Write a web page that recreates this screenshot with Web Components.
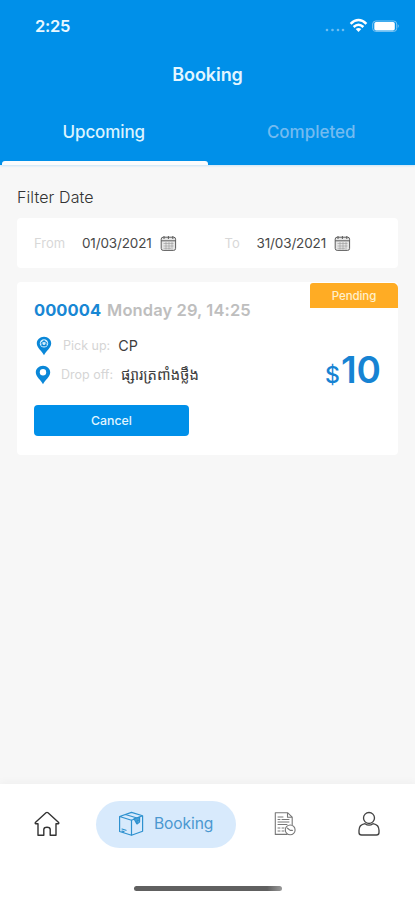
<!DOCTYPE html>
<html lang="en"><head><meta charset="utf-8"><title>Booking</title>
<style>
html,body{margin:0;height:100%;overflow:hidden}
body{font-family:Inter,"Noto Sans",sans-serif}
</style></head><body>
<booking-app></booking-app>
<script>
const define=(name,html)=>{
  const t=document.createElement('template');t.innerHTML=html;
  customElements.define(name,class extends HTMLElement{
    constructor(){super();this.attachShadow({mode:'open'}).append(t.content.cloneNode(true));}
  });
};
define('status-bar',`<style>
:host{display:flex;height:52px;box-sizing:border-box;padding:0 16px 0 35px;align-items:center;justify-content:space-between;color:#e9f8ff}
b{font:600 16.5px/20px Inter,sans-serif;letter-spacing:-.25px}svg{display:block}
</style><b>2:25</b>
<svg width="75" height="18" viewBox="0 0 75 18"><g fill="#6dbdf1"><circle cx="3" cy="13" r="1.3"/><circle cx="8.5" cy="13" r="1.3"/><circle cx="14" cy="13" r="1.3"/><circle cx="19" cy="13" r="1.3"/></g>
<g fill="none" stroke="#fff" stroke-width="2.5"><path d="M26.6 6.8Q34.5-.8 42.4 6.8"/><path d="M29.6 10Q34.5 5.4 39.4 10"/></g><path d="M31.7 12Q34.5 9.8 37.3 12L34.5 15Z" fill="#fff"/>
<rect x="48.7" y="4" width="24" height="10.4" rx="3" fill="none" stroke="#7fc6f3"/><rect x="50.3" y="5" width="20.5" height="8.5" rx="1.7" fill="#fff"/><path d="M73.8 7.3Q75.6 9 73.8 11" fill="#8acbf5"/></svg>`);
define('tab-item',`<style>
:host{display:flex;flex:1;flex-direction:column;justify-content:flex-end;align-items:center;color:#74bbf0;font:500 17px/24px Inter,sans-serif}
:host([active]){color:#dbf3ff}
i{display:block;width:100%;height:4px;margin-top:17px}
:host([active]) i{background:#fbfcfd;border-radius:3px 3px 0 0;width:calc(100% - 2px);margin-left:2px}
</style><slot></slot><i></i>`);
define('app-header',`<style>
:host{display:flex;flex-direction:column;height:165px;background:#0090e9;box-shadow:0 1px 2px #0090e930}
h1{margin:0;text-align:center;color:#e3f6ff;font:600 18px/46px Inter,sans-serif;letter-spacing:-.05px}
nav{display:flex;flex:1}
</style><status-bar></status-bar><h1>Booking</h1><nav><tab-item active style="letter-spacing:-.1px">Upcoming</tab-item><tab-item>Completed</tab-item></nav>`);
define('date-field',`<style>
:host{display:flex;align-items:center;font:400 13.5px/20px Inter,sans-serif;color:#484848}
span{color:#d8d8d8;width:var(--label,48px);font-size:13px}
b{font-weight:400;letter-spacing:-.15px}svg{margin-left:8px}
</style><span><slot name="label"></slot></span><b><slot></slot></b>
<svg width="17" height="17" viewBox="0 0 17 17" fill="none" stroke="#5d5d5d"><rect x="1.2" y="2.2" width="14.4" height="13.2" rx="2" fill="#e6e6e6"/><path d="M1.2 5.8H15.6M4 1V4M8.4 1V4M12.8 1V4"/><path d="M3.5 8.5H13.5M3.5 11H13.5M3.5 13.3H11M6 7V14.5M9 7V14.5M12 7V14.5" stroke="#999" stroke-width=".6"/></svg>`);
define('filter-bar',`<style>
:host{display:flex;height:50px;align-items:center;background:#fff;border-radius:4px;padding-left:17px}
date-field+date-field{margin-left:48px;--label:32px}
</style><date-field><span slot="label">From</span>01/03/2021</date-field><date-field><span slot="label">To</span>31/03/2021</date-field>`);
define('place-row',`<style>
:host{display:flex;height:29px;align-items:center;font:400 14.3px/20px Inter,"Noto Sans Khmer","Khmer OS",sans-serif;color:#3d3d3d}
svg{flex:none;margin-right:var(--gap,11px);margin-left:var(--inset,2px)}
.l{color:#d5d5d5;font-size:12.5px;margin-right:8px}
.home{display:none}:host([home]) .home{display:block}
</style><svg width="16" height="20" viewBox="0 0 16 20"><path d="M8 .7C3.9.7 .8 3.7 .8 7.4 .8 11.7 6 15 8 19.2 10 15 15.2 11.7 15.2 7.4 15.2 3.7 12.1.7 8 .7Z" fill="#0a87d8"/><circle class="dot" cx="8" cy="7.2" r="3.2" fill="#fff"/><g class="home"><circle cx="8" cy="7.4" r="4.2" fill="#d7effd"/><path d="M4.7 7.2 8 4.4 11.3 7.2M5.8 6.5V10H10.2V6.5" fill="#0a87d8" stroke="#0a87d8" stroke-width=".7"/><circle cx="8" cy="7.6" r="1.5" fill="#d7effd"/></g></svg><span class="l"><slot name="label"></slot></span><slot></slot>`);
define('booking-card',`<style>
:host{display:grid;grid-template-columns:1fr auto;grid-template-rows:49px 58px 1fr;height:173px;background:#fff;border-radius:4px;box-sizing:border-box;padding-left:17px}
.head{display:flex;align-items:center;padding-top:7px;font:600 16.5px/20px Inter,sans-serif;color:#bebebe;white-space:nowrap}
.head b{font-weight:650;color:#1887d4;margin-right:6px;letter-spacing:.05px}
.head span{letter-spacing:.1px}
.tag{width:88px;height:25px;margin-top:1px;justify-self:end;background:#ffac24;color:#fff0cc;border-radius:3px 5px 0 0;text-align:center;font:500 11.5px/27px Inter,sans-serif;letter-spacing:-.1px}
.price{align-self:center;padding:24px 17px 0 0;color:#1683d3;font:600 37px/40px Inter,sans-serif;text-align:right;white-space:nowrap}
.price small{font-size:23px;font-weight:500;margin-right:1px}
button{display:block;width:155px;height:31px;border:0;border-radius:4px;background:#0090e9;color:#e0f5ff;font:500 12.3px/31px Inter,sans-serif;padding:0;margin:16px 0 0}
place-row+place-row{--inset:1px;--gap:10px}
</style><div class="head"><b>000004</b><span>Monday 29, 14:25</span></div><div class="tag">Pending</div>
<div><place-row home><span slot="label">Pick up:</span>CP</place-row><place-row><span slot="label">Drop off:</span><span style="font-size:14.8px">ផ្សារត្រពាំងថ្លឹង</span></place-row></div>
<div class="price"><small>$</small>10</div><div><button>Cancel</button></div>`);
define('nav-bar',`<style>
:host{display:flex;flex-direction:column;align-items:center;height:116px;background:#fff;box-shadow:0 -2px 8px #00000009}
.row{display:grid;grid-template-columns:93px 146px 92px 1fr;width:100%;height:48px;margin-top:16px;align-items:center;justify-items:center}
.pill{display:flex;align-items:center;gap:10px;box-sizing:border-box;padding-left:22px;width:140px;height:47px;border-radius:24px;background:#d8eafc;color:#4b98d0;font:400 15.6px/20px Inter,sans-serif;letter-spacing:-.1px}
.bar{width:148px;height:5px;border-radius:3px;background:linear-gradient(90deg,#606060,#606060 90%,#999);margin-top:38px}
svg{display:block;fill:none;stroke:#333;stroke-width:1.4;stroke-linejoin:round;stroke-linecap:round}
</style><div class="row">
<svg width="26" height="26" viewBox="0 0 26 26"><path d="M4 12.8H1.8C1 12.5 1 11.8 1.6 11.2L12 1.7Q13 1 14 1.7L24.4 11.2C25 11.8 25 12.5 24.2 12.8H22V24.2H16.2V18.2Q15.7 16.3 13 16.3 10.3 16.3 9.8 18.2V24.2H4Z"/></svg>
<div class="pill"><svg width="26" height="26" viewBox="0 0 26 26" style="stroke:#2e91cf;stroke-width:1.2"><path d="M1.6 5.5 13.5 1.4 24.6 4.8V20.3L13.5 24.3 1.6 20.5ZM1.6 5.5 13.5 9.2 24.6 4.8M13.5 9.2V24.3M7.5 3.5 19 7V13L21.5 11V6M4 18 8 19.3M4 20 6 20.6"/><path d="M16 7.8 21.5 6V10.4L19.3 9.4 18.6 12.5Z" fill="#4ba1d8"/></svg><span>Booking</span></div>
<svg width="24" height="26" viewBox="0 0 24 26" style="stroke:#777;stroke-width:1.1"><path d="M14 23.4H2.3V1.7H14.5L19.2 6.2V13.6M14.5 1.7V6.2H19.2"/><path d="M5 6H10M5 8.5H7M9 8.5H16M5 11H16M5 13.5H14M5 17H7M9 17H11M5 20H7M9 20H11" stroke-width="1"/><circle cx="17.2" cy="18.9" r="4.9" fill="#fff"/><path d="M14.5 17.2 17.2 19.4H19.4"/></svg>
<svg width="24" height="26" viewBox="0 0 24 26" style="margin-right:9px;stroke:#444;stroke-width:1.35"><circle cx="12" cy="7" r="5.5"/><path d="M8 12.7C4 13.4 2 15.6 2 19.2V21.5Q2 24 4.6 24H19.4Q22 24 22 21.5V19.2C22 15.6 20 13.4 16 12.7Q12 15.6 8 12.7Z"/></svg>
</div><div class="bar"></div>`);
define('booking-app',`<style>
:host{display:flex;flex-direction:column;height:900px;width:415px;background:#f7f7f7}
main{flex:1;padding:20px 17px 0}
h2{margin:0 0 9px;font:300 16px/24px Inter,sans-serif;color:#333;letter-spacing:.1px}
filter-bar{margin-bottom:14px}
</style><app-header></app-header><main><h2>Filter Date</h2><filter-bar></filter-bar><booking-card></booking-card></main><nav-bar></nav-bar>`);
</script></body></html>
